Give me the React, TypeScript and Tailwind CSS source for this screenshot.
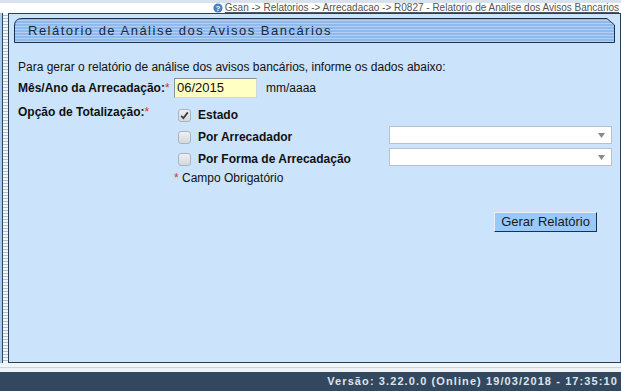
import React from 'react';

const font = { fontFamily: '"Liberation Sans", Arial, sans-serif' };

const Check: React.FC<{ checked?: boolean }> = ({ checked }) => (
  <div className="w-[13px] h-[13px] rounded-[3px] border border-[#a9b3bd] bg-gradient-to-b from-[#eef0f2] to-[#d5d9dd] flex items-center justify-center">
    {checked && (
      <svg width="9" height="9" viewBox="0 0 9 9">
        <path d="M1.2 4.8 L3.4 7.2 L7.8 1.4" fill="none" stroke="#3d3d3d" strokeWidth="1.8" />
      </svg>
    )}
  </div>
);

const Select: React.FC = () => (
  <div className="w-[223px] h-[18px] mb-[4px] bg-white border border-[#b8c2cc] flex items-center justify-end pr-[6px]">
    <svg width="7" height="5" viewBox="0 0 7 5">
      <path d="M0 0 H7 L3.5 5 Z" fill="#8a8a8a" />
    </svg>
  </div>
);

const TitleBar: React.FC = () => (
  <div className="relative ml-[5px] mr-[6px] mt-[4px] h-[25px]">
    <svg className="absolute inset-0" width="601" height="25" viewBox="0 0 601 25">
      <defs>
        <pattern id="stripes" width="4" height="3" patternUnits="userSpaceOnUse">
          <rect width="4" height="3" fill="#8db9ee" />
          <rect y="2" width="4" height="1" fill="#b2d0f4" />
        </pattern>
      </defs>
      <path
        d="M0.5 24.5 V8 Q0.5 0.5 8 0.5 H593 L600.5 7 V24.5 Z"
        fill="url(#stripes)"
        stroke="#1e3047"
      />
    </svg>
    <div className="relative h-full flex items-center pl-[14px] text-[13px] tracking-[1.5px] text-[#1b2838]">
      Relátorio de Análise dos Avisos Bancários
    </div>
  </div>
);

export default function App() {
  return (
    <div className="w-[621px] h-[391px] flex flex-col bg-white overflow-hidden text-[#111]" style={font}>
      <div className="h-[3px] bg-[#d7e2ee]" />
      <div className="h-[10px] flex items-center justify-end pr-[2px] gap-[2px]">
        <svg width="10" height="10" viewBox="0 0 10 10">
          <circle cx="5" cy="5" r="4.6" fill="#4a7fc4" />
          <text x="5" y="8" textAnchor="middle" fontSize="8" fontWeight="bold" fill="#fff" fontFamily="Liberation Sans, sans-serif">?</text>
        </svg>
        <span className="text-[10px] leading-[10px] text-[#555] underline">
          Gsan -&gt; Relatorios -&gt; Arrecadacao -&gt; R0827 - Relatorio de Analise dos Avisos Bancarios
        </span>
      </div>

      <div className="flex-1 flex min-h-0">
        <div className="w-[8px] flex">
          <div className="w-[2px] bg-[#a9c9ee]" />
          <div className="w-[1px] bg-[#2b4664]" />
          <div className="flex-1 bg-[repeating-linear-gradient(to_bottom,#f4f7fa_0px,#f4f7fa_2px,#aebfd1_2px,#aebfd1_3px)]" />
        </div>
        <div className="flex-1 border border-[#2c3e52] bg-[#cbe4fb] flex flex-col">
          <TitleBar />
          <div className="pl-[9px] text-[12px]">
            <div className="mt-[17px] leading-[14px]">
              Para gerar o relatório de análise dos avisos bancários, informe os dados abaixo:
            </div>
            <div className="mt-[4px] flex items-center h-[20px]">
              <div className="w-[156px] font-bold">
                Mês/Ano da Arrecadação:<span className="text-[#e0302a] font-normal">*</span>
              </div>
              <div className="w-[83px] h-[20px] bg-[#ffffc4] border border-[#8a8f96] border-b-[#d6d6d6] border-r-[#d6d6d6] flex items-center pl-[2px] text-[13px]">
                06/2015
              </div>
              <div className="ml-[9px]">mm/aaaa</div>
            </div>
            <div className="flex">
              <div className="w-[156px] pt-[7px] font-bold leading-[14px]">
                Opção de Totalização:<span className="text-[#e0302a] font-normal">*</span>
              </div>
              <div className="pt-[6px]">
                <div className="h-[22px] flex items-center">
                  <div className="ml-[4px]"><Check checked /></div>
                  <div className="ml-[7px] font-bold">Estado</div>
                </div>
                <div className="h-[22px] flex items-center">
                  <div className="ml-[4px]"><Check /></div>
                  <div className="ml-[7px] w-[191px] font-bold">Por Arrecadador</div>
                  <Select />
                </div>
                <div className="h-[22px] flex items-center">
                  <div className="ml-[4px]"><Check /></div>
                  <div className="ml-[7px] w-[191px] font-bold">Por Forma de Arrecadação</div>
                  <Select />
                </div>
                <div className="mt-[1px] leading-[14px]">
                  <span className="text-[#e0302a]">*</span> Campo Obrigatório
                </div>
              </div>
            </div>
            <div className="mt-[27px] flex justify-end pr-[23px]">
              <div className="h-[20px] px-[6px] flex items-center bg-[#99c8fb] border border-[#e6f1fc] border-b-[#1d3148] border-r-[#1d3148] text-[13px] text-[#1a1a1a]">
                Gerar Relatório
              </div>
            </div>
          </div>
        </div>
      </div>

      <div className="h-[9px] flex flex-col">
        <div className="h-[4px] bg-[#f3f6f9]" />
        <div className="h-[1px] bg-[#c3d7ea]" />
        <div className="flex-1 bg-[#eef3f8]" />
      </div>
      <div className="h-[19px] bg-[#33485f] flex items-center justify-end pr-[3px] text-[11px] font-bold tracking-[1.1px] text-[#dfe4ea]">
        Versão: 3.22.0.0 (Online) 19/03/2018 - 17:35:10
      </div>
    </div>
  );
}
